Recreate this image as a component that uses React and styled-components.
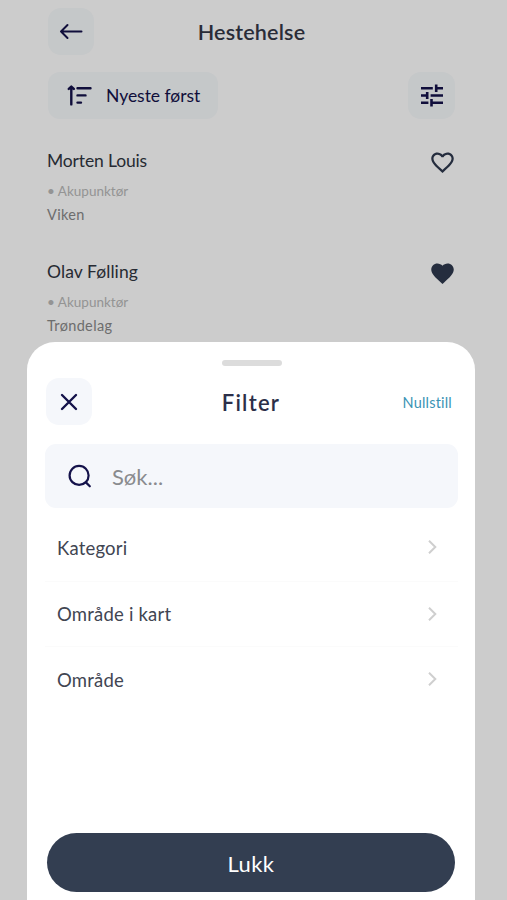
import React from 'react'
import styled, { createGlobalStyle } from 'styled-components'

const GlobalStyle = createGlobalStyle`
  * {
    box-sizing: border-box;
  }

  body {
    margin: 0;
    background: #fff;
    font-family: Lato, 'Open Sans', sans-serif;
  }

  button, input {
    font-family: inherit;
    border: 0;
    padding: 0;
  }
`

const Screen = styled.div`
  position: relative;
  height: 900px;
  overflow: hidden;
`

const Page = styled.div`
  padding: 8px 52px 0 48px;
`

const Header = styled.header`
  display: grid;
  grid-template-columns: 46px 1fr 46px;
  align-items: center;
  height: 47px;
`

const Title = styled.h1`
  margin: 0;
  text-align: center;
  font-size: ${p => p.$size}px;
  line-height: 28px;
  font-weight: 600;
  letter-spacing: ${p => p.$spacing}px;
  color: ${p => p.$color};
`

const SheetTitle = styled(Title)`
  padding: 2px 0 0 4px;
`

const IconButton = styled.button`
  display: flex;
  align-items: center;
  justify-content: center;
  width: ${p => p.$width || 46}px;
  height: 47px;
  border-radius: 13px;
  background: #f5f7fb;
  color: #14124a;
`

const PageIconButton = styled(IconButton)`
  background: #f7fafc;
`

const Toolbar = styled.div`
  display: flex;
  justify-content: space-between;
  margin: 17px 0 0;
`

const SortButton = styled.button`
  display: flex;
  align-items: center;
  width: 170px;
  height: 47px;
  padding-left: 19px;
  gap: 14px;
  border-radius: 12px;
  background: #f7fafc;
  color: #14124a;
  font-size: 17.5px;
  font-weight: 400;
  letter-spacing: -0.03px;
`

const Person = styled.article`
  display: flex;
  justify-content: space-between;
  height: 111px;
  padding-top: 29px;
`

const Name = styled.h2`
  margin: 1px 0 7px -1px;
  font-size: 17.5px;
  line-height: 24px;
  font-weight: 400;
  letter-spacing: ${p => p.$spacing}px;
  color: #303540;
`

const Meta = styled.p`
  margin: 0 0 0 -1px;
  font-size: ${p => p.$size || 14.5}px;
  line-height: 23px;
  color: ${p => p.$color || '#898989'};
  letter-spacing: ${p => p.$spacing || 0}px;
`

const HeartIcon = styled.svg`
  width: 27px;
  height: 27px;
  margin: 0.5px -0.8px 0 0;
`

const Backdrop = styled.div`
  position: absolute;
  inset: 0;
  background: rgba(0, 0, 0, 0.2);
`

const Sheet = styled.section`
  position: absolute;
  left: 27px;
  right: 32px;
  top: 342px;
  bottom: 0;
  display: flex;
  flex-direction: column;
  padding: 18px 17px 8px 18px;
  border-radius: 28px 28px 0 0;
  background: #fff;
`

const Handle = styled.div`
  align-self: center;
  width: 60px;
  height: 6px;
  border-radius: 3px;
  background: #dcdcdc;
`

const SheetHeader = styled.div`
  display: grid;
  grid-template-columns: 64px 1fr 64px;
  align-items: center;
  margin: 12px 6px 0 1px;
`

const ResetButton = styled.button`
  justify-self: end;
  padding-top: 1px;
  background: none;
  color: #3a93b5;
  font-size: 14.5px;
  font-weight: 400;
  letter-spacing: 0.2px;
  white-space: nowrap;
`

const SearchField = styled.label`
  display: flex;
  align-items: center;
  gap: 19px;
  height: 64px;
  margin-top: 19px;
  padding-left: 22px;
  border-radius: 11px;
  background: #f5f7fb;
  color: #14124a;
`

const SearchInput = styled.input`
  width: 240px;
  background: transparent;
  font-size: 22px;

  &::placeholder {
    color: #8a8b8e;
  }
`

const FilterList = styled.ul`
  list-style: none;
  margin: 7px 0 0;
  padding: 0;
`

const FilterRow = styled.li`
  display: flex;
  align-items: center;
  justify-content: space-between;
  height: 65.7px;
  padding: 0 21px 0 12px;
  font-size: 18.5px;
  font-weight: 400;
  letter-spacing: 0.2px;
  color: #414552;

  & + & {
    border-top: 1px solid #fbfbfb;
  }
`

const CloseButton = styled.button`
  height: 59px;
  margin: auto 3px 0 2px;
  padding-top: 1px;
  border-radius: 30px;
  background: #333e51;
  color: #fff;
  font-size: 22px;
  font-weight: 400;
  letter-spacing: 0.4px;
`

const people = [
  { name: 'Morten Louis', category: 'Akupunktør', area: 'Viken', liked: false, spacing: -0.15 },
  { name: 'Olav Følling', category: 'Akupunktør', area: 'Trøndelag', liked: true, spacing: 0.08 },
]

const filters = ['Kategori', 'Område i kart', 'Område']

const ArrowLeft = () => (
  <svg width='24' height='20' viewBox='0 0 24 20' fill='none' stroke='currentColor' strokeWidth='2' strokeLinecap='round' strokeLinejoin='round'>
    <path d='M22.5 9.5H2M8.5 3L2 9.5 8.5 16' />
  </svg>
)

const SortIcon = () => (
  <svg width='25' height='22' viewBox='0 0 25 22' fill='none' stroke='currentColor' strokeWidth='2.4' strokeLinecap='round' strokeLinejoin='round'>
    <path d='M4.3 19.4V3M1.8 3.9l2.5-2.3 2.5 2.3M10.5 3.2H23.5M10.5 10.4h8M10.5 17.6h3.5' />
  </svg>
)

const TuneIcon = () => (
  <svg width='24' height='24' viewBox='0 0 24 24' fill='none' stroke='currentColor' strokeWidth='2.6'>
    <path d='M1 4.3h11.8M16.2.6v7.4M16.2 4.3H23M1 11.5h6.2M7.2 7.9v7.2M10.6 11.5H23M1 18.7h7.4M11.5 15.1v7.4M11.5 18.7H23' />
  </svg>
)

const Heart = ({ filled }) => (
  <HeartIcon viewBox='0 0 24 24' fill='#2f394e'>
    {filled ? (
      <path d='M12 21.35l-1.45-1.32C5.4 15.36 2 12.28 2 8.5 2 5.42 4.42 3 7.5 3c1.74 0 3.41.81 4.5 2.09C13.09 3.81 14.76 3 16.5 3 19.58 3 22 5.42 22 8.5c0 3.78-3.4 6.86-8.55 11.54L12 21.35z' />
    ) : (
      <path d='M16.5 3c-1.74 0-3.41.81-4.5 2.09C10.91 3.81 9.24 3 7.5 3 4.42 3 2 5.42 2 8.5c0 3.78 3.4 6.86 8.55 11.54L12 21.35l1.45-1.32C18.6 15.36 22 12.28 22 8.5 22 5.42 19.58 3 16.5 3zm-4.4 15.55l-.1.1-.1-.1C7.14 14.24 4 11.39 4 8.5 4 6.5 5.5 5 7.5 5c1.54 0 3.04.99 3.57 2.36h1.87C13.46 5.99 14.96 5 16.5 5c2 0 3.5 1.5 3.5 3.5 0 2.89-3.14 5.74-7.9 10.05z' />
    )}
  </HeartIcon>
)

const CrossIcon = () => (
  <svg width='18' height='18' viewBox='0 0 18 18' fill='none' stroke='currentColor' strokeWidth='2.4' strokeLinecap='round'>
    <path d='M2 2l14 14M16 2L2 16' />
  </svg>
)

const SearchIcon = () => (
  <svg width='26' height='26' viewBox='0 0 26 26' fill='none' stroke='currentColor' strokeWidth='2.2' strokeLinecap='round'>
    <circle cx='12.1' cy='12.4' r='9.5' />
    <path d='M18.9 19.4l3.9 3.9' />
  </svg>
)

const ChevronIcon = () => (
  <svg width='9' height='15' viewBox='0 0 9 15' fill='none' stroke='#cfcfcf' strokeWidth='2'>
    <path d='M1 .8L7.3 7 1 13.2' />
  </svg>
)

const App = () => (
  <>
    <GlobalStyle />
    <Screen>
      <Page>
        <Header>
          <PageIconButton aria-label='Tilbake'><ArrowLeft /></PageIconButton>
          <Title $size={21.5} $spacing={0.2} $color='#343847'>Hestehelse</Title>
        </Header>

        <Toolbar>
          <SortButton><SortIcon />Nyeste først</SortButton>
          <PageIconButton $width={47} aria-label='Filter'><TuneIcon /></PageIconButton>
        </Toolbar>

        {people.map(person => (
          <Person key={person.name}>
            <div>
              <Name $spacing={person.spacing}>{person.name}</Name>
              <Meta $size={13.5} $color='#b9b9b9'>• {person.category}</Meta>
              <Meta $spacing={0.35}>{person.area}</Meta>
            </div>
            <Heart filled={person.liked} />
          </Person>
        ))}
      </Page>

      <Backdrop />

      <Sheet>
        <Handle />
        <SheetHeader>
          <IconButton aria-label='Lukk'><CrossIcon /></IconButton>
          <SheetTitle as='h2' $size={22} $spacing={1.25} $color='#2c2f49'>Filter</SheetTitle>
          <ResetButton>Nullstill</ResetButton>
        </SheetHeader>

        <SearchField>
          <SearchIcon />
          <SearchInput placeholder='Søk...' />
        </SearchField>

        <FilterList>
          {filters.map(label => (
            <FilterRow key={label}>
              {label}
              <ChevronIcon />
            </FilterRow>
          ))}
        </FilterList>

        <CloseButton>Lukk</CloseButton>
      </Sheet>
    </Screen>
  </>
)

export default App
